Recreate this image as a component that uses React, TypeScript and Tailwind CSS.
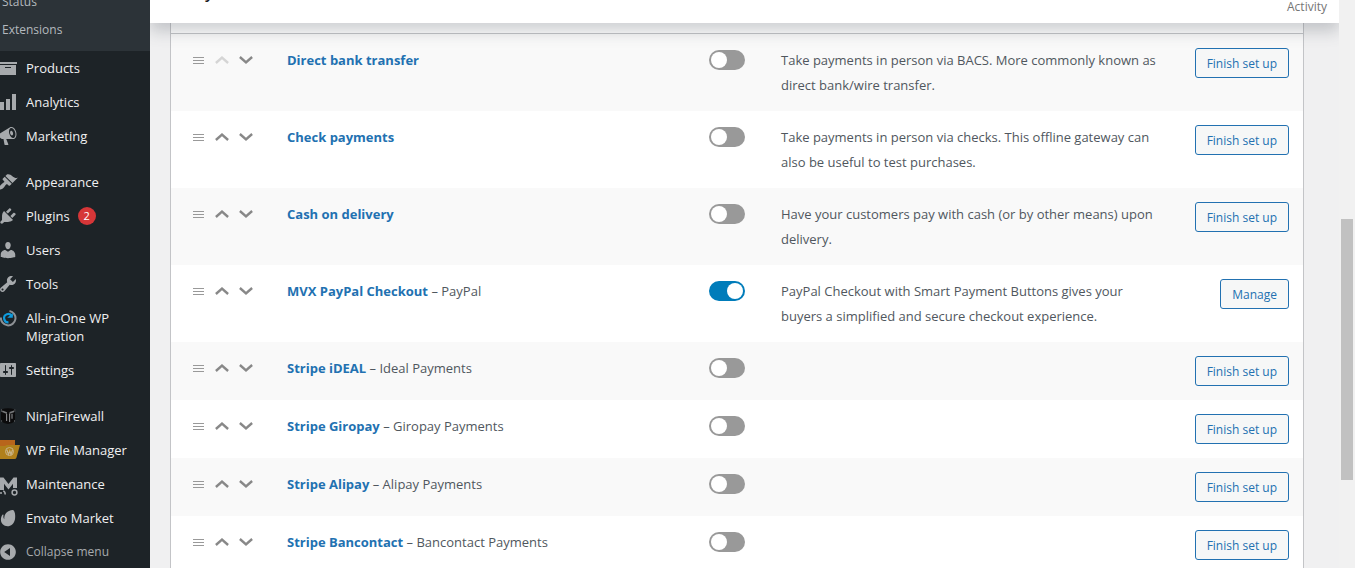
import type { ReactNode } from "react";

type MenuItem = { label: string; icon: ReactNode; badge?: number };

type Gateway = {
  name: string;
  suffix?: string;
  description?: string;
  enabled?: boolean;
  action: string;
};

function Glyph({ d }: { d: string }) {
  return <path d={d} fill="currentColor" fillRule="evenodd" />;
}

function MenuIcon({ children }: { children: ReactNode }) {
  return (
    <svg
      viewBox="2 0 18 20"
      className="h-5 w-[18px] shrink-0 overflow-visible text-[#a7aaad]"
      aria-hidden="true"
    >
      {children}
    </svg>
  );
}

const menuGroups: MenuItem[][] = [
  [
    { label: "Products", icon: <Glyph d="M19 4v2H1V4h18zM2 7h16v10H2V7zm11 3V9H7v1h6z" /> },
    { label: "Analytics", icon: <Glyph d="M18 18V2h-4v16h4zm-6 0V7H8v11h4zm-6 0v-8H2v8h4z" /> },
    {
      label: "Marketing",
      icon: (
        <Glyph d="M18.15 5.94c.46 1.62.38 3.22-.02 4.48-.42 1.28-1.26 2.18-2.3 2.48-.16.06-.26.06-.4.06-.06.02-.12.02-.18.02-.06.02-.14.02-.22.02h-6.8l2.22 5.5c.02.14-.06.26-.14.34-.08.1-.24.16-.34.16H6.95c-.1 0-.26-.06-.34-.16-.08-.08-.16-.2-.14-.34l-1-5.5H4.25l-.02-.02c-.5.06-1.08-.18-1.54-.62s-.88-1.08-1.06-1.88c-.24-.8-.2-1.56-.02-2.2.18-.62.58-1.08 1.06-1.3l.02-.02 9-5.4c.1-.06.18-.1.24-.16.06-.04.14-.08.24-.12.16-.08.28-.12.5-.18 1.04-.3 2.24.1 3.22.98s1.84 2.24 2.26 3.86zm-2.58 5.98h-.02c.4-.1.74-.34 1.04-.7.58-.7.86-1.76.86-3.04 0-.64-.1-1.3-.28-1.98-.34-1.36-1.02-2.5-1.78-3.24s-1.68-1.1-2.46-.88c-.82.22-1.4.96-1.7 2-.32 1.04-.28 2.36.06 3.72.38 1.36 1 2.5 1.8 3.24.78.74 1.62 1.1 2.48.88zm-2.54-7.08c.22-.04.42-.02.62.04.38.16.76.48 1.02 1s.42 1.2.42 1.78c0 .3-.04.56-.12.8-.18.48-.44.84-.86.94-.34.1-.8-.06-1.14-.4s-.64-.86-.78-1.5c-.18-.62-.12-1.24.02-1.72s.48-.84.82-.94z" />
      ),
    },
  ],
  [
    {
      label: "Appearance",
      icon: (
        <Glyph d="M14.48 11.06L7.41 3.99l1.5-1.5c.5-.56 2.3-.47 3.51.32 1.21.8 1.43 1.28 2.91 2.1 1.18.64 2.45 1.26 4.45.85zm-.71.71L6.7 4.7 4.93 6.47c-.39.39-.39 1.02 0 1.41l1.06 1.06c.39.39.39 1.03 0 1.42-.6.6-1.43 1.11-2.21 1.69-.35.26-.7.53-1.01.84C1.43 14.23.4 16.08 1.4 17.07c.99 1 2.84-.03 4.18-1.36.31-.31.58-.66.85-1.02.57-.78 1.08-1.61 1.69-2.21.39-.39 1.02-.39 1.41 0l1.06 1.06c.39.39 1.02.39 1.41 0z" />
      ),
    },
    {
      label: "Plugins",
      badge: 2,
      icon: (
        <Glyph d="M13.11 4.36L9.87 7.6 8 5.73l3.24-3.24c.35-.34 1.05-.2 1.56.32.52.51.66 1.21.31 1.55zm-8 1.77l.91-1.12 9.01 9.01-1.19.84c-.71.71-2.63 1.16-3.82 1.16H6.14L4.9 17.26c-.59.59-1.54.59-2.12 0-.59-.58-.59-1.53 0-2.12l1.24-1.24v-3.88c0-1.13.4-3.19 1.09-3.89zm7.26 3.97l3.24-3.24c.34-.35 1.04-.21 1.55.31.52.51.66 1.21.31 1.55l-3.24 3.25z" />
      ),
    },
    {
      label: "Users",
      icon: (
        <Glyph d="M10 9.25c-2.27 0-2.73-3.44-2.73-3.44C7 4.02 7.82 2 9.97 2c2.16 0 2.98 2.02 2.71 3.81 0 0-.41 3.44-2.68 3.44zm0 2.57L12.72 10c2.39 0 4.52 2.33 4.52 4.53v2.49s-3.65 1.13-7.24 1.13c-3.65 0-7.24-1.13-7.24-1.13v-2.49c0-2.25 1.94-4.48 4.47-4.48z" />
      ),
    },
    {
      label: "Tools",
      icon: (
        <Glyph d="M16.68 9.77c-1.34 1.34-3.3 1.67-4.95.99l-5.41 6.52c-.99.99-2.59.99-3.58 0s-.99-2.59 0-3.57l6.52-5.42c-.68-1.65-.35-3.61.99-4.95 1.28-1.28 3.12-1.62 4.72-1.06l-2.89 2.89 2.82 2.82 2.86-2.87c.53 1.58.18 3.39-1.08 4.65zM3.81 16.21c.4.39 1.04.39 1.43 0 .4-.4.4-1.04 0-1.43-.39-.4-1.03-.4-1.43 0-.39.39-.39 1.03 0 1.43z" />
      ),
    },
    {
      label: "All-in-One WP Migration",
      icon: (
        <g fill="none">
          <path d="M11.5 2.9A7.300 7.300 0 1 1 2.900 9.500" stroke="#8d9195" strokeWidth="2" />
          <path d="M14 8.200A4.200 4.200 0 1 0 10.500 14.400" stroke="#0f9bdc" strokeWidth="2.200" />
          <path d="M9.200 9.800h5.600V5z" fill="#0f9bdc" />
        </g>
      ),
    },
    {
      label: "Settings",
      icon: (
        <Glyph d="M18 16V4c0-.55-.45-1-1-1H3c-.55 0-1 .45-1 1v12c0 .55.45 1 1 1h14c.55 0 1-.45 1-1zM8 11h1c.55 0 1 .45 1 1s-.45 1-1 1H8v1.5c0 .28-.22.5-.5.5s-.5-.22-.5-.5V13H6c-.55 0-1-.45-1-1s.45-1 1-1h1V5.5c0-.28.22-.5.5-.5s.5.22.5.5V11zm5-2h-1c-.55 0-1-.45-1-1s.45-1 1-1h1V5.5c0-.28.22-.5.5-.5s.5.22.5.5V7h1c.55 0 1 .45 1 1s-.45 1-1 1h-1v5.5c0 .28-.22.5-.5.5s-.5-.22-.5-.5V9z" />
      ),
    },
  ],
  [
    {
      label: "NinjaFirewall",
      icon: (
        <g>
          <path d="M3 3.5Q10 1 17 3.5V15q-3 3-7 3t-7-3z" fill="#0b0b0c" />
          <path d="M4.5 4.5 9 6.2V8L4 6zM16 4.5 11.5 6v1.8L16 6.3z" fill="#77797b" />
          <path d="M8.6 8v7M11.6 7.5v8.5M14 7.8v5" stroke="#8a8c8e" strokeWidth="1.1" />
          <path d="M3.5 3v3M16.8 3v3M3.6 14v2M16.5 14v2" stroke="#45484b" strokeWidth="1" />
        </g>
      ),
    },
    {
      label: "WP File Manager",
      icon: (
        <g>
          <path d="M2 0h15v9H2z" fill="#b8651b" />
          <path d="M2 6h5l1.500-1H22L18.500 17.500q-.500 1.500-2 1.500H2z" fill="#b0801c" />
          <circle cx="11.500" cy="11.500" r="4" fill="none" stroke="#c9b489" strokeWidth="1" />
          <path
            d="M8.800 9.800 10.600 14.500l1.200-3.600 1.200 3.600 1.500-4.500"
            fill="none"
            stroke="#c9b489"
            strokeWidth="1.200"
          />
        </g>
      ),
    },
    {
      label: "Maintenance",
      icon: (
        <g>
          <path d="M2 3.500h3.500l5 6.500 5-6.500H19V14h-4V9.800l-4.500 5.700L6 9.800V16H2z" fill="currentColor" />
          <circle cx="16.500" cy="18.500" r="2.400" fill="none" stroke="currentColor" strokeWidth="1.500" />
          <path d="M3 20v-2M7.200 20.500q0-3-2-3.500" fill="none" stroke="currentColor" strokeWidth="1.500" />
        </g>
      ),
    },
    {
      label: "Envato Market",
      icon: (
        <Glyph d="M15.4 2.2c1.4.6 2.3 5.300 1.600 9C16.100 15.600 13 18.200 9.600 18.200 5.600 18.200 2.900 15.300 2.900 11.800c0-2.200.700-4 1.800-5.200.500-.400.900-.100.800.400-.300 1.500-.200 3.200.800 4.300C6.100 7 8 4.600 11 3.100c1.600-.800 3.400-1.300 4.400-.900z" />
      ),
    },
  ],
];

const gateways: Gateway[] = [
  {
    name: "Direct bank transfer",
    description:
      "Take payments in person via BACS. More commonly known as direct bank/wire transfer.",
    action: "Finish set up",
  },
  {
    name: "Check payments",
    description:
      "Take payments in person via checks. This offline gateway can also be useful to test purchases.",
    action: "Finish set up",
  },
  {
    name: "Cash on delivery",
    description: "Have your customers pay with cash (or by other means) upon delivery.",
    action: "Finish set up",
  },
  {
    name: "MVX PayPal Checkout",
    suffix: "PayPal",
    description:
      "PayPal Checkout with Smart Payment Buttons gives your buyers a simplified and secure checkout experience.",
    enabled: true,
    action: "Manage",
  },
  { name: "Stripe iDEAL", suffix: "Ideal Payments", action: "Finish set up" },
  { name: "Stripe Giropay", suffix: "Giropay Payments", action: "Finish set up" },
  { name: "Stripe Alipay", suffix: "Alipay Payments", action: "Finish set up" },
  { name: "Stripe Bancontact", suffix: "Bancontact Payments", action: "Finish set up" },
];

function Sidebar() {
  return (
    <nav className="w-[150px] shrink-0 overflow-hidden bg-[#1d2327] text-[13px] leading-[18px] text-[#f0f0f1]">
      <div className="flex h-[51px] flex-col justify-end bg-[#2c3338] pb-[7px] pl-0.5 text-[12px] text-[#b4b9be]">
        <a href="#status" className="block py-[5px]">Status</a>
        <a href="#extensions" className="block py-[5px]">Extensions</a>
      </div>
      <div className="flex flex-col gap-3">
        {menuGroups.map((group, index) => (
          <ul key={index}>
            {group.map((item) => (
              <li key={item.label}>
                <a href="#menu" className="flex items-start gap-2 py-2 pr-5">
                  <span className="flex h-[18px] items-center">
                    <MenuIcon>{item.icon}</MenuIcon>
                  </span>
                  <span>{item.label}</span>
                  {item.badge && (
                    <span className="flex size-[18px] items-center justify-center rounded-full bg-[#d63638] text-[11px] text-white">
                      {item.badge}
                    </span>
                  )}
                </a>
              </li>
            ))}
            {index === menuGroups.length - 1 && (
              <li>
                <button type="button" className="flex items-center gap-2 py-2 text-[12px] text-[#a7aaad]">
                  <span className="flex h-[18px] items-center">
                    <MenuIcon>
                      <Glyph d="M10 2.16c4.33 0 7.84 3.51 7.84 7.84s-3.51 7.84-7.84 7.84S2.16 14.33 2.16 10 5.71 2.16 10 2.16zm2 11.72V6.12L6.18 9.97z" />
                    </MenuIcon>
                  </span>
                  Collapse menu
                </button>
              </li>
            )}
          </ul>
        ))}
      </div>
    </nav>
  );
}

function SortControls({ name, first }: { name: string; first: boolean }) {
  return (
    <div className="flex h-6 items-center pl-2 text-[#888]">
      <svg viewBox="0 0 12 10" className="h-2.5 w-3" aria-hidden="true">
        <path d="M0 2.500h11M0 5.500h11M0 8.500h11" stroke="#999" strokeWidth="1" />
      </svg>
      <button
        type="button"
        aria-label={`Move ${name} up`}
        disabled={first}
        className="ml-2.5 disabled:text-[#d5d5d5]"
      >
        <svg viewBox="0 0 14 8" className="block h-2 w-3.5">
          <path d="M.900 7 7 1.600 13.100 7" fill="none" stroke="currentColor" strokeWidth="2.400" />
        </svg>
      </button>
      <button type="button" aria-label={`Move ${name} down`} className="ml-2.5">
        <svg viewBox="0 0 14 8" className="block h-2 w-3.5">
          <path d="M.900 1 7 6.400 13.100 1" fill="none" stroke="currentColor" strokeWidth="2.400" />
        </svg>
      </button>
    </div>
  );
}

function Toggle({ name, enabled }: { name: string; enabled: boolean }) {
  return (
    <span className="flex h-6 items-center">
      <input
        type="checkbox"
        role="switch"
        aria-label={`Enable ${name}`}
        defaultChecked={enabled}
        className="h-5 w-9 appearance-none rounded-full bg-[#999] p-0.5 before:block before:size-4 before:rounded-full before:bg-white checked:bg-[#007cba] checked:before:ml-auto"
      />
    </span>
  );
}

function GatewayTable() {
  return (
    <table className="w-full table-fixed border-separate border-spacing-0 border-x border-[#c3c4c7] text-[13px] leading-[25px] text-[#50575e]">
      <colgroup>
        <col className="w-[102px]" />
        <col />
        <col className="w-[72px]" />
        <col className="w-[414px]" />
        <col className="w-[122px]" />
      </colgroup>
      <tbody>
        {gateways.map((gateway, index) => (
          <tr key={gateway.name} className="h-[58px] bg-white align-top odd:bg-[#f9f9f9]">
            <td className="px-3.5 pt-3.5 pb-[13px]">
              <SortControls name={gateway.name} first={index === 0} />
            </td>
            <td className="px-3.5 pt-3.5 pb-[13px]">
              <a href="#gateway" className="font-bold text-[#2271b1]">
                {gateway.name}
              </a>
              {gateway.suffix && <span> – {gateway.suffix}</span>}
            </td>
            <td className="px-3.5 pt-3.5 pb-[13px]">
              <Toggle name={gateway.name} enabled={Boolean(gateway.enabled)} />
            </td>
            <td className="px-3.5 pt-3.5 pb-[13px]">{gateway.description}</td>
            <td className="px-3.5 pt-3.5 pb-[13px]">
              <div className="flex justify-end">
                <a
                  href="#setup"
                  className="flex h-[30px] items-center rounded-[3px] border border-[#2271b1] bg-[#f6f7f7] px-[11px] text-[12px] whitespace-nowrap text-[#2271b1]"
                >
                  {gateway.action}
                </a>
              </div>
            </td>
          </tr>
        ))}
      </tbody>
    </table>
  );
}

export default function App() {
  return (
    <div className="flex h-screen overflow-hidden bg-[#f0f0f1] font-['Open_Sans','Noto_Sans',sans-serif]">
      <Sidebar />
      <main className="min-w-0 flex-1 overflow-hidden">
        <header className="relative flex h-[23px] items-end justify-between bg-white pr-3 pb-[7px] pl-9 shadow-[0_8px_16px_rgba(85,93,102,0.3)]">
          <h1 className="mb-3.5 text-[16px] leading-5 font-semibold text-[#1e1e1e]">Payments</h1>
          <button type="button" className="text-[12px] leading-[18px] text-[#757575]">
            Activity
          </button>
        </header>
        <div className="pr-[35px] pl-5">
          <div className="h-[11px] border-x border-b border-[#c3c4c7] bg-white" />
          <GatewayTable />
        </div>
      </main>
      <div className="w-4 shrink-0 bg-[#f1f1f1] px-0.5 pt-[219px]" aria-hidden="true">
        <div className="h-[261px] bg-[#c1c1c1]" />
      </div>
    </div>
  );
}
